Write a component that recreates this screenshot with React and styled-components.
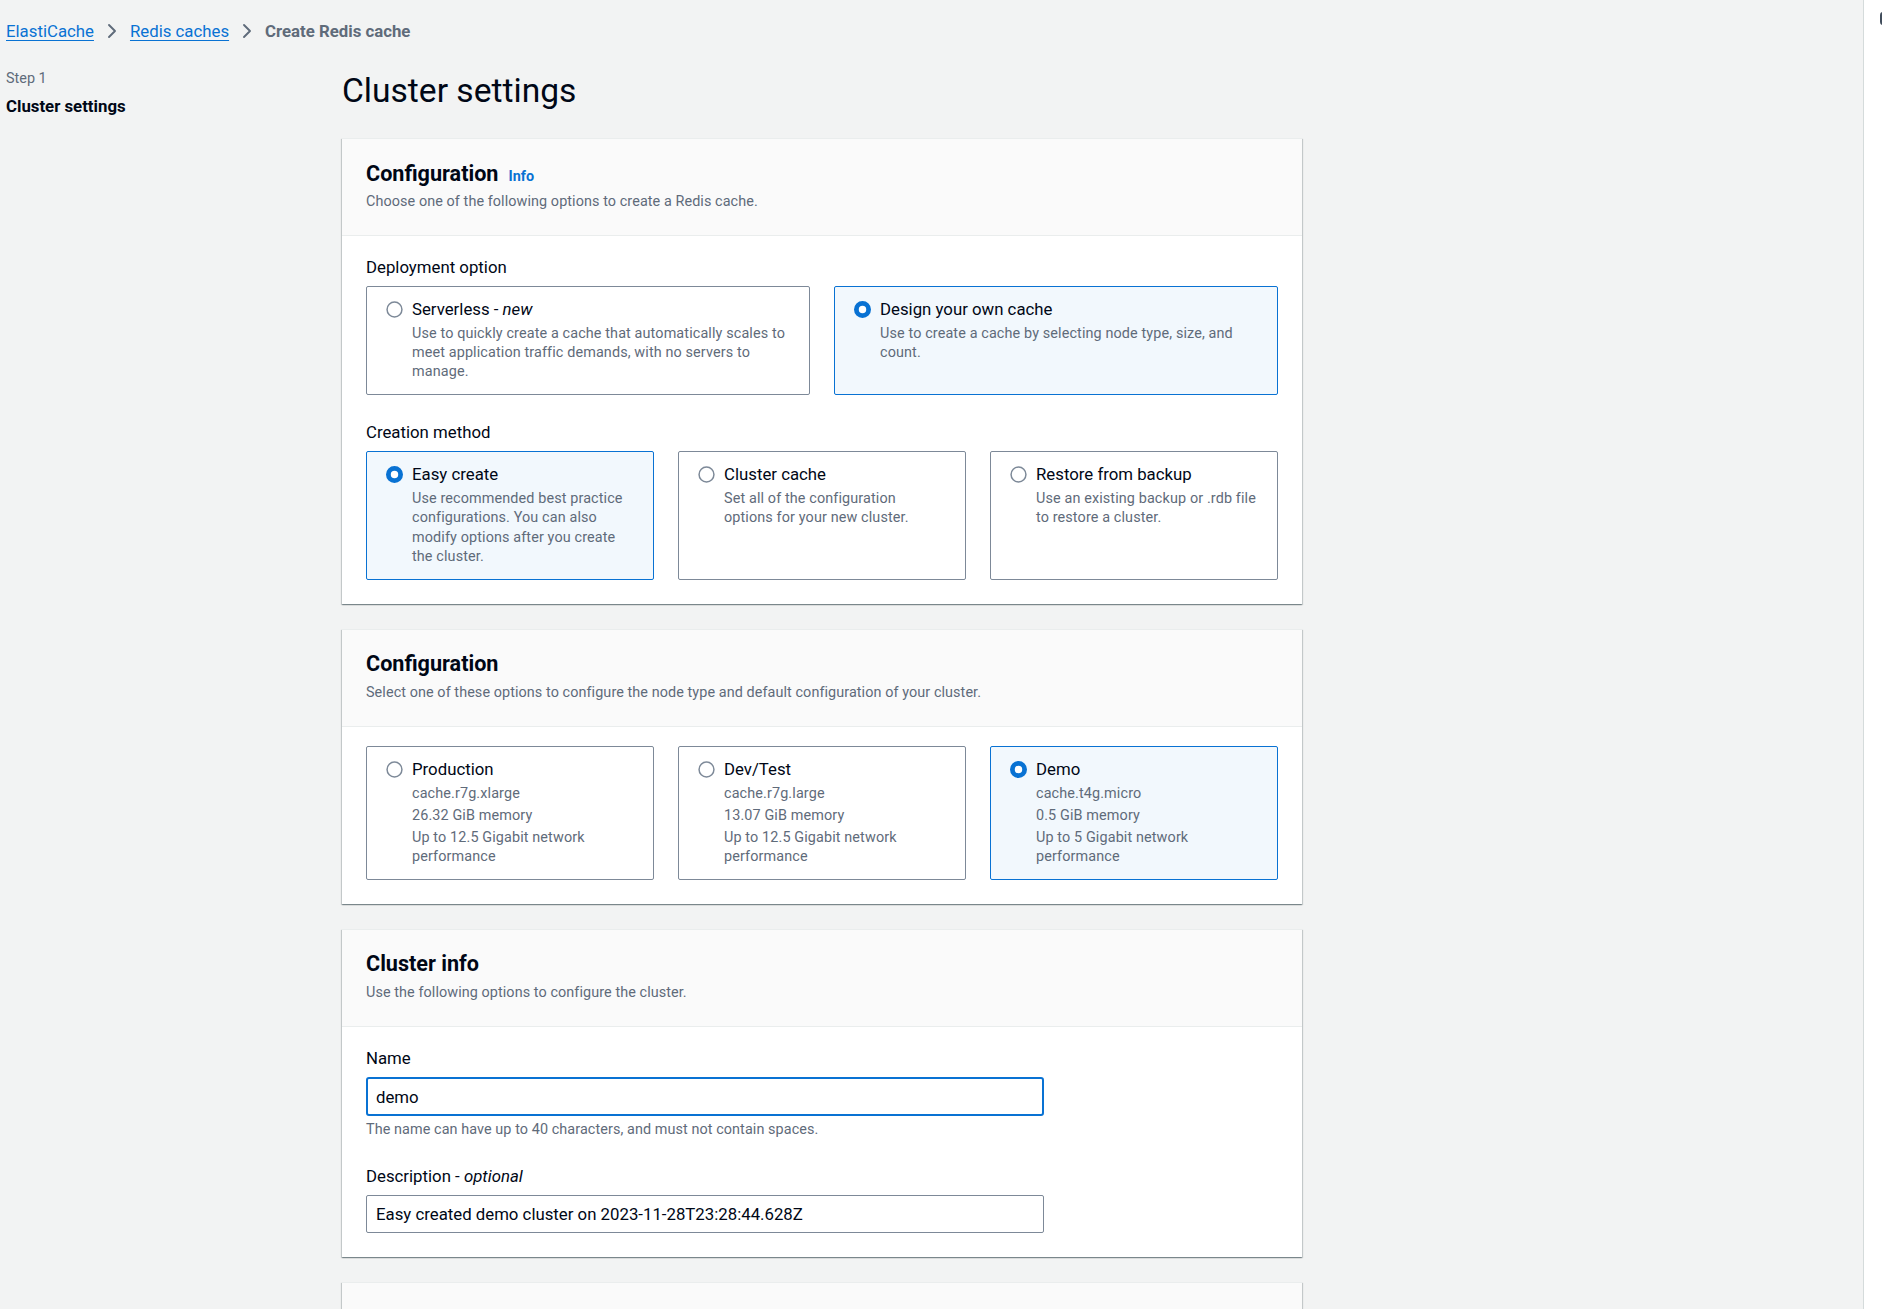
import React from "react";
import styled, { createGlobalStyle } from "styled-components";

const Global = createGlobalStyle`
  html, body { margin: 0; padding: 0; height: 100%; overflow: hidden; }
  body {
    background: #f2f3f3;
    font-family: Roboto, "Liberation Sans", Arial, sans-serif;
    color: #000716;
    -webkit-font-smoothing: antialiased;
  }
  * { box-sizing: border-box; }
`;

const Page = styled.div`
  display: flex;
  height: 100vh;
  overflow: hidden;
`;

const Main = styled.div`
  flex: 1;
  padding: 19px 0 0 6px;
  overflow: hidden;
`;

const ToolsRail = styled.aside`
  width: 19px;
  flex: none;
  background: #ffffff;
  border-left: 1px solid #d5dbdb;
  padding: 12px 0 0 16px;
  overflow: hidden;
`;

const RailIcon = styled.div`
  width: 8px;
  height: 13px;
  border-radius: 3px;
  border: 2px solid #414d5c;
`;

const Crumbs = styled.nav`
  display: flex;
  align-items: center;
  gap: 11px;
  font-size: 16.8px;
  line-height: 24px;
`;

const CrumbLink = styled.a`
  color: #0972d3;
  text-decoration: underline;
  text-underline-offset: 3px;
  text-decoration-thickness: 1px;
  cursor: pointer;
`;

const CrumbCurrent = styled.span`
  color: #5f6b7a;
  font-weight: 700;
`;

const Chevron = () => (
  <svg width="14" height="16" viewBox="0 0 14 16" fill="none">
    <polyline points="4,2 10,8 4,14" stroke="#5f6b7a" strokeWidth="1.9" strokeLinejoin="round" strokeLinecap="round" />
  </svg>
);

const Layout = styled.div`
  display: grid;
  grid-template-columns: 336px 960px;
  margin-top: 24px;
  align-items: start;
`;

const SideNav = styled.div`
  display: flex;
  flex-direction: column;
  gap: 6px;
  padding-top: 2px;
`;

const StepLabel = styled.div`
  font-size: 14.4px;
  line-height: 19.2px;
  color: #5f6b7a;
`;

const StepName = styled.div`
  font-size: 16.8px;
  line-height: 24px;
  font-weight: 700;
  color: #000716;
`;

const Content = styled.div`
  display: flex;
  flex-direction: column;
  gap: 25px;
  padding-bottom: 40px;
`;

const PageTitle = styled.h1`
  margin: 4px 0 2px;
  font-size: 33.6px;
  line-height: 40px;
  font-weight: 400;
  color: #000716;
`;

const Panel = styled.section`
  background: #ffffff;
  border-top: 1px solid #eaeded;
  box-shadow: 0 1px 1px 0 rgba(0, 28, 36, 0.3), 1px 1px 1px 0 rgba(0, 28, 36, 0.15),
    -1px 1px 1px 0 rgba(0, 28, 36, 0.15);
  min-height: ${(p) => p.$minHeight || "auto"};
`;

const PanelHeader = styled.header`
  background: #fafafa;
  border-bottom: 1px solid #eaeded;
  padding: ${(p) => (p.$withInfo ? "21px" : "20px")} 24px 24px;
`;

const PanelTitle = styled.h2`
  margin: 0;
  display: flex;
  align-items: baseline;
  gap: 10px;
  font-size: 21.6px;
  line-height: 28.8px;
  font-weight: 700;
  color: #000716;
`;

const InfoLink = styled.a`
  font-size: 14.4px;
  font-weight: 700;
  color: #0972d3;
  cursor: pointer;
`;

const PanelDesc = styled.p`
  margin: ${(p) => (p.$tight ? "0" : "4px")} 0 0;
  font-size: 14.4px;
  line-height: 19.2px;
  letter-spacing: 0.08px;
  color: #5f6b7a;
`;

const PanelBody = styled.div`
  padding: 19px 24px 24px;
  display: flex;
  flex-direction: column;
  gap: 25px;
`;

const Field = styled.div`
  display: flex;
  flex-direction: column;
  gap: 7px;
`;

const FieldLabel = styled.label`
  font-size: 16.8px;
  line-height: 24px;
  color: #000716;
  em { font-style: italic; }
`;

const Hint = styled.div`
  font-size: 14.4px;
  line-height: 19.2px;
  letter-spacing: 0.08px;
  color: #5f6b7a;
  margin-top: -3px;
`;

const Tiles = styled.div`
  display: grid;
  grid-template-columns: repeat(${(p) => p.$cols}, 1fr);
  gap: 24px;
`;

const Tile = styled.div`
  display: flex;
  gap: 9px;
  padding: 10px 19px 13px;
  border: 1px solid ${(p) => (p.$selected ? "#0972d3" : "#7d8998")};
  background: ${(p) => (p.$selected ? "#f2f8fd" : "#ffffff")};
  border-radius: 2px;
  cursor: pointer;
`;

const RadioWrap = styled.span`
  flex: none;
  height: 24px;
  display: flex;
  align-items: center;
`;

const TileText = styled.div`
  display: flex;
  flex-direction: column;
  gap: 2.8px;
`;

const TileLabel = styled.div`
  font-size: 16.8px;
  line-height: 24px;
  color: #000716;
  em { font-style: italic; }
`;

const TileDesc = styled.div`
  font-size: 14.4px;
  line-height: 19.2px;
  letter-spacing: 0.12px;
  color: #5f6b7a;
`;

const TextInput = styled.input`
  width: 678px;
  height: ${(p) => (p.$focused ? "39px" : "38px")};
  font-family: inherit;
  font-size: 16.8px;
  color: #000716;
  padding: 0 ${(p) => (p.$focused ? "8px" : "9px")};
  border: ${(p) => (p.$focused ? "2px solid #0972d3" : "1px solid #7d8998")};
  border-radius: ${(p) => (p.$focused ? "3px" : "2px")};
  background: #ffffff;
  outline: none;
`;

const Radio = ({ checked }) => (
  <svg width="17" height="17" viewBox="0 0 16 16">
    {checked ? (
      <circle cx="8" cy="8" r="5.75" fill="#ffffff" stroke="#0972d3" strokeWidth="4.5" />
    ) : (
      <circle cx="8" cy="8" r="7" fill="#ffffff" stroke="#7d8998" strokeWidth="1.4" />
    )}
  </svg>
);

const OptionTile = ({ selected, label, lines }) => (
  <Tile $selected={selected}>
    <RadioWrap>
      <Radio checked={selected} />
    </RadioWrap>
    <TileText>
      <TileLabel>{label}</TileLabel>
      {lines.map((l, i) => (
        <TileDesc key={i}>{l}</TileDesc>
      ))}
    </TileText>
  </Tile>
);

export default function App() {
  return (
    <>
      <Global />
      <Page>
        <Main>
          <Crumbs>
            <CrumbLink>ElastiCache</CrumbLink>
            <Chevron />
            <CrumbLink>Redis caches</CrumbLink>
            <Chevron />
            <CrumbCurrent>Create Redis cache</CrumbCurrent>
          </Crumbs>
          <Layout>
            <SideNav>
              <StepLabel>Step 1</StepLabel>
              <StepName>Cluster settings</StepName>
            </SideNav>
            <Content>
              <PageTitle>Cluster settings</PageTitle>

              <Panel>
                <PanelHeader $withInfo>
                  <PanelTitle>
                    Configuration <InfoLink>Info</InfoLink>
                  </PanelTitle>
                  <PanelDesc $tight>Choose one of the following options to create a Redis cache.</PanelDesc>
                </PanelHeader>
                <PanelBody>
                  <Field>
                    <FieldLabel>Deployment option</FieldLabel>
                    <Tiles $cols={2}>
                      <OptionTile
                        label={<>Serverless - <em>new</em></>}
                        lines={["Use to quickly create a cache that automatically scales to meet application traffic demands, with no servers to manage."]}
                      />
                      <OptionTile
                        selected
                        label="Design your own cache"
                        lines={["Use to create a cache by selecting node type, size, and count."]}
                      />
                    </Tiles>
                  </Field>
                  <Field>
                    <FieldLabel>Creation method</FieldLabel>
                    <Tiles $cols={3}>
                      <OptionTile
                        selected
                        label="Easy create"
                        lines={["Use recommended best practice configurations. You can also modify options after you create the cluster."]}
                      />
                      <OptionTile
                        label="Cluster cache"
                        lines={["Set all of the configuration options for your new cluster."]}
                      />
                      <OptionTile
                        label="Restore from backup"
                        lines={["Use an existing backup or .rdb file to restore a cluster."]}
                      />
                    </Tiles>
                  </Field>
                </PanelBody>
              </Panel>

              <Panel>
                <PanelHeader>
                  <PanelTitle>Configuration</PanelTitle>
                  <PanelDesc>
                    Select one of these options to configure the node type and default configuration of your cluster.
                  </PanelDesc>
                </PanelHeader>
                <PanelBody>
                  <Tiles $cols={3}>
                    <OptionTile
                      label="Production"
                      lines={["cache.r7g.xlarge", "26.32 GiB memory", "Up to 12.5 Gigabit network performance"]}
                    />
                    <OptionTile
                      label="Dev/Test"
                      lines={["cache.r7g.large", "13.07 GiB memory", "Up to 12.5 Gigabit network performance"]}
                    />
                    <OptionTile
                      selected
                      label="Demo"
                      lines={["cache.t4g.micro", "0.5 GiB memory", "Up to 5 Gigabit network performance"]}
                    />
                  </Tiles>
                </PanelBody>
              </Panel>

              <Panel>
                <PanelHeader>
                  <PanelTitle>Cluster info</PanelTitle>
                  <PanelDesc>Use the following options to configure the cluster.</PanelDesc>
                </PanelHeader>
                <PanelBody>
                  <Field>
                    <FieldLabel>Name</FieldLabel>
                    <TextInput $focused defaultValue="demo" />
                    <Hint>The name can have up to 40 characters, and must not contain spaces.</Hint>
                  </Field>
                  <Field>
                    <FieldLabel>
                      Description - <em>optional</em>
                    </FieldLabel>
                    <TextInput defaultValue="Easy created demo cluster on 2023-11-28T23:28:44.628Z" />
                  </Field>
                </PanelBody>
              </Panel>

              <Panel $minHeight="200px">
                <PanelHeader />
              </Panel>
            </Content>
          </Layout>
        </Main>
        <ToolsRail>
          <RailIcon />
        </ToolsRail>
      </Page>
    </>
  );
}
